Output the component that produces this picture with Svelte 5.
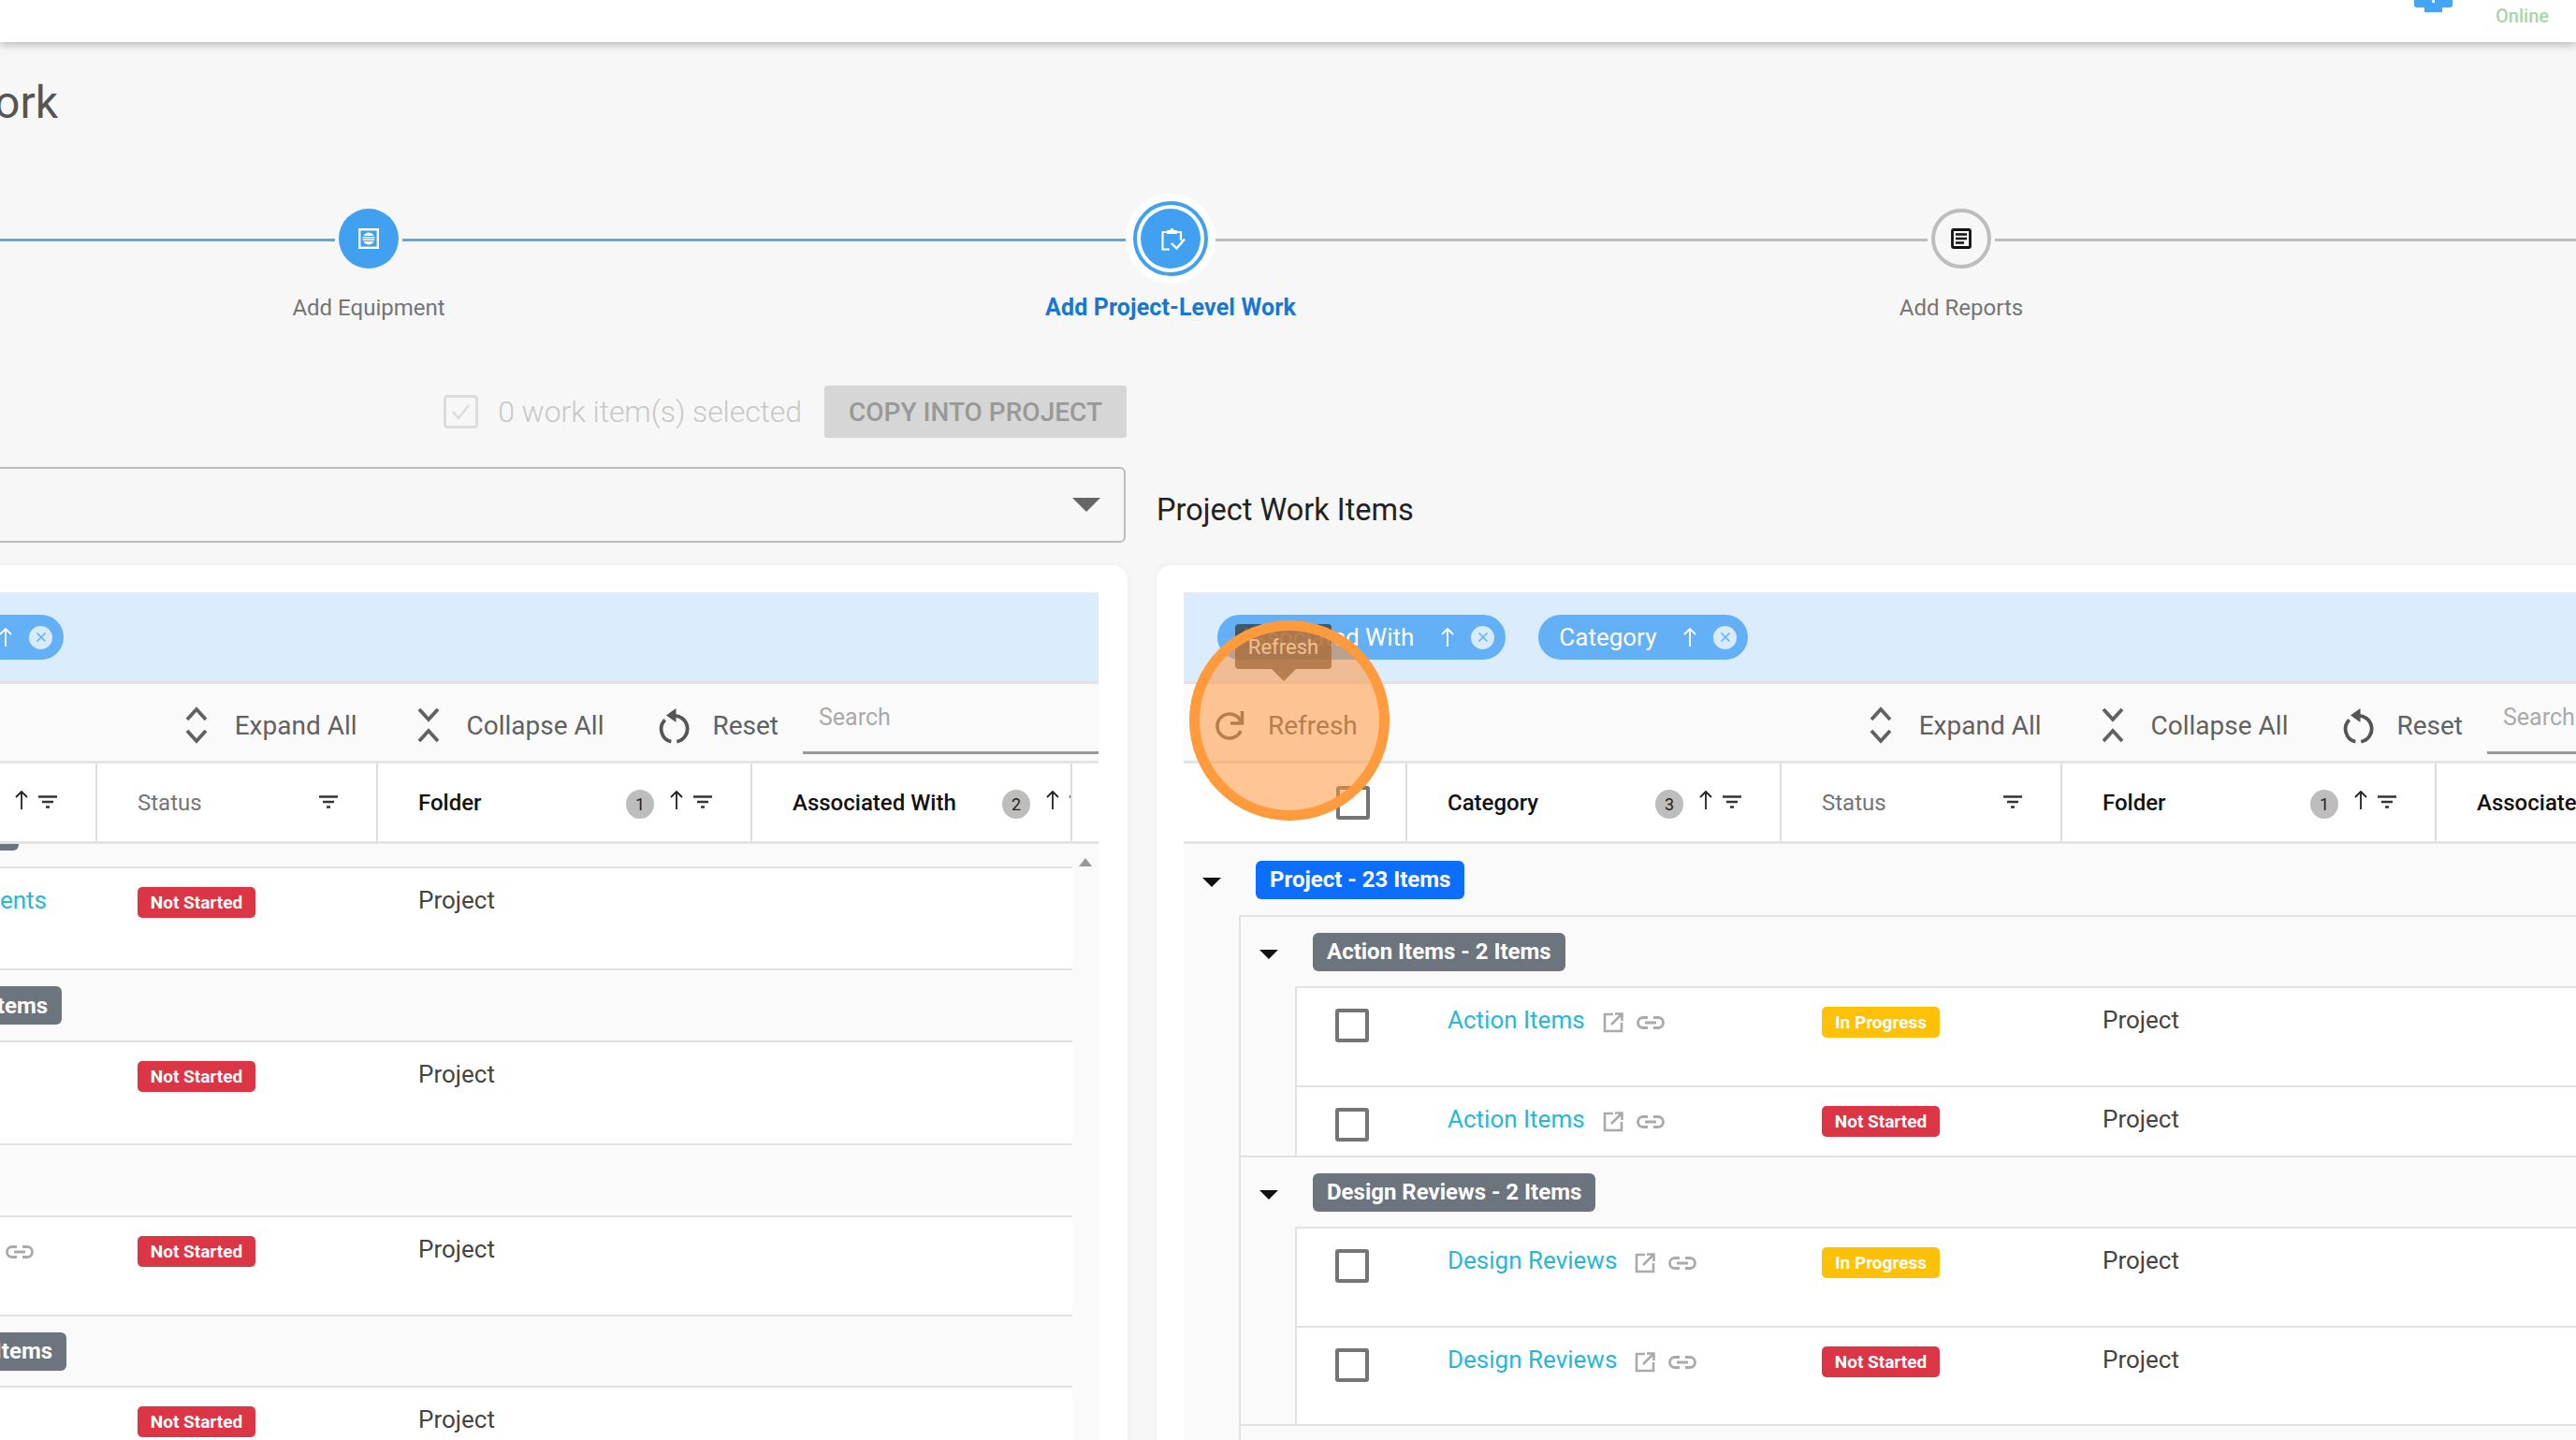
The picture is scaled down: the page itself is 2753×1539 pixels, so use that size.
<script>
  const chips = ["Associated With", "Category"];

  const leftGroups = [
    { label: "Assessments - 1 Items", chipWidth: 417, headHeight: 75, rows: [
      { name: "Site Condition Assessments", nameWidth: 303, status: "Not Started", height: 109 }
    ] },
    { label: "Closeout Items - 1 Items", chipWidth: 463, headHeight: 75, rows: [
      { name: "Closeout Checklist", nameWidth: 209, status: "Not Started", height: 110 }
    ] },
    { label: "", chipWidth: 0, headHeight: 75, rows: [
      { name: "Daily Reports", nameWidth: 204, icons: true, status: "Not Started", height: 106 }
    ] },
    { label: "Inspection Items - 1 Items", chipWidth: 468, headHeight: 74, rows: [
      { name: "Inspections", nameWidth: 209, status: "Not Started", height: 106 }
    ] }
  ];

  const rightGroups = [
    { label: "Action Items - 2 Items", headHeight: 74, rows: [
      { name: "Action Items", icons: true, status: "In Progress", height: 106 },
      { name: "Action Items", icons: true, status: "Not Started", height: 75 }
    ] },
    { label: "Design Reviews - 2 Items", headHeight: 74, rows: [
      { name: "Design Reviews", icons: true, status: "In Progress", height: 106 },
      { name: "Design Reviews", icons: true, status: "Not Started", height: 105 }
    ] },
    { label: "Drawings - 1 Items", headHeight: 74, rows: [
      { name: "Drawings", icons: true, status: "Not Started", height: 106 }
    ] }
  ];

  const panels = [
    { refresh: false, scrolled: true, groups: leftGroups },
    { refresh: true, scrolled: false, groups: rightGroups }
  ];
</script>

{#snippet sortArrow()}
  <svg class="sort-arrow" viewBox="0 0 14 20" width="14" height="20">
    <path d="M7 20V1M1 7l6-6 6 6" fill="none" stroke="#222" stroke-width="1.8" />
  </svg>
{/snippet}

{#snippet filterIcon()}
  <svg class="filter" viewBox="0 0 20 14" width="20" height="14">
    <path d="M0 1.5h20M4 7h12M8 12.5h4" fill="none" stroke="#333" stroke-width="2.6" />
  </svg>
{/snippet}

{#snippet rowIcons()}
  <svg class="ext" viewBox="0 0 22 22" width="22" height="22">
    <path d="M11 2H2v18h18v-9M9 13 20 2M13 1.5h7.500V9" fill="none" stroke="#aaa" stroke-width="2.600" />
  </svg>
  <svg class="chain" viewBox="0 0 32 14" width="32" height="14">
    <path d="M13 1.500H8a5.500 5.500 0 0 0 0 11h5M19 1.500h5a5.500 5.500 0 0 1 0 11h-5M10 7h12" fill="none" stroke="#aaa" stroke-width="2.800" />
  </svg>
{/snippet}

{#snippet headCell(title, rank, muted, wide)}
  <div class="hcell" class:clip={wide}>
    <div class="hinner" class:wide>
      <span class="htitle" class:muted>{title}</span>
      <span class="hactions">
        {#if rank}
          <span class="rank">{rank}</span>
          {@render sortArrow()}
        {/if}
        {@render filterIcon()}
      </span>
    </div>
  </div>
{/snippet}

{#snippet group(g)}
  <div class="level1">
    <div class="head" style="height: {g.headHeight}px">
      {#if g.label}
        <span class="caret"></span>
        <span class="gchip grey" style={g.chipWidth ? `width: ${g.chipWidth}px` : ""}>{g.label}</span>
      {/if}
    </div>
    <div class="rows">
      {#each g.rows as row}
        <div class="row" style="height: {row.height}px">
          <div class="cell check"><span class="box"></span></div>
          <div class="cell name">
            <span class="link" style={row.nameWidth ? `width: ${row.nameWidth}px` : ""}>{row.name}</span>
            {#if row.icons}{@render rowIcons()}{/if}
          </div>
          <div class="cell">
            <span class="badge" class:yellow={row.status === "In Progress"}>{row.status}</span>
          </div>
          <div class="cell folder">Project</div>
        </div>
      {/each}
    </div>
  </div>
{/snippet}

<div class="page">
  <header class="topbar">
    <svg class="monitor" viewBox="0 0 41 13" width="41" height="13">
      <path d="M0 0h41v5a3 3 0 0 1-3 3H30v5H11V8H3a3 3 0 0 1-3-3z" fill="#42a5f5" />
      <rect x="19" y="0" width="3" height="3" fill="#fff" />
    </svg>
    <span class="online">Online</span>
  </header>

  <div class="canvas">
    <h1>Add Project-Level Work</h1>

    <div class="stepper">
      <div class="step" style="width: 856px">
        <div class="track">
          <span class="line blue"></span>
          <span class="dot filled">
            <svg viewBox="0 0 22 22" width="22" height="22">
              <rect x="1.200" y="1.200" width="19.600" height="19.600" fill="none" stroke="#fff" stroke-width="2.400" />
              <circle cx="11" cy="11" r="6.500" fill="#fff" />
              <path d="M5 8.500h12M4.500 11h13M5 13.500h12" stroke="#42a0ee" stroke-width="1.200" />
            </svg>
          </span>
          <span class="line blue"></span>
        </div>
        <div class="label">Add Equipment</div>
      </div>
      <div class="step" style="width: 858px">
        <div class="track">
          <span class="line blue"></span>
          <span class="halo">
            <span class="ring">
              <span class="core">
                <svg class="clip-icon" viewBox="0 0 27 25" width="27" height="25">
                  <path d="M10 23.500H2.500V5H22v9" fill="none" stroke="#fff" stroke-width="2.200" />
                  <path d="M7 7V3h3.500a2 2 0 0 1 4 0H18v4z" fill="#fff" />
                  <path d="M12 17l5.500 5.500L26 12.500" fill="none" stroke="#fff" stroke-width="2.400" />
                </svg>
              </span>
            </span>
          </span>
          <span class="line grey"></span>
        </div>
        <div class="label active">Add Project-Level Work</div>
      </div>
      <div class="step" style="width: 832px">
        <div class="track">
          <span class="line grey"></span>
          <span class="dot outlined">
            <svg viewBox="0 0 22 22" width="22" height="22">
              <rect x="1.500" y="1.500" width="19" height="19" rx="1.500" fill="none" stroke="#111" stroke-width="2.800" />
              <path d="M5 6.500h12M5 11h12M5 15.500h9" stroke="#111" stroke-width="2.400" />
            </svg>
          </span>
          <span class="line grey"></span>
        </div>
        <div class="label">Add Reports</div>
      </div>
      <div class="tail"><span class="line grey"></span></div>
    </div>

    <div class="copy-row">
      <span class="copy-check">
        <svg viewBox="0 0 37 36" width="37" height="36">
          <rect x="1.500" y="1.500" width="34" height="33" rx="3" fill="none" stroke="#dcdcdc" stroke-width="3" />
          <path d="M10 18l6 7 11-14" fill="none" stroke="#dcdcdc" stroke-width="2.600" />
        </svg>
      </span>
      <span class="copy-count">0 work item(s) selected</span>
      <button class="copy-btn">COPY INTO PROJECT</button>
    </div>

    <div class="columns">
      <div class="select"><span class="select-arrow"></span></div>
      <div class="col-title">Project Work Items</div>
    </div>

    <div class="columns cards">
      {#each panels as panel}
        <section class="card">
          <div class="band">
            {#each chips as chip}
              <span class="chip">
                <span class="chip-text">{chip}</span>
                <svg viewBox="0 0 14 20" width="14" height="20">
                  <path d="M7 20V1M1 7l6-6 6 6" fill="none" stroke="#fff" stroke-width="1.800" />
                </svg>
                <span class="chip-close">
                  <svg viewBox="0 0 12 12" width="12" height="12">
                    <path d="M1.500 1.500l9 9M10.500 1.500l-9 9" stroke="#64b0f6" stroke-width="1.600" />
                  </svg>
                </span>
              </span>
            {/each}
          </div>

          <div class="toolbar">
            <div class="tool refresh">
              <svg viewBox="0 0 32 32" width="32" height="32">
                <path d="M27 12A13 13 0 1 0 27 22" fill="none" stroke="#616161" stroke-width="3.600" />
                <path d="M28.500 1v13H16" fill="none" stroke="#616161" stroke-width="3.600" />
              </svg>
              <span>Refresh</span>
            </div>
            <div class="tool-group">
              <div class="tool">
                <svg viewBox="0 0 32 40" width="32" height="40">
                  <path d="M6 14 16 3l10 11M6 26l10 11 10-11" fill="none" stroke="#616161" stroke-width="3.800" />
                </svg>
                <span>Expand All</span>
              </div>
              <div class="tool second">
                <svg viewBox="0 0 32 40" width="32" height="40">
                  <path d="M6 3l10 11L26 3M6 37l10-11 10 11" fill="none" stroke="#616161" stroke-width="3.800" />
                </svg>
                <span>Collapse All</span>
              </div>
              <div class="tool third">
                <svg viewBox="14 14 36 40" width="36" height="40">
                  <path d="M29 24.200A14 14 0 0 1 34.300 51.700M28.300 51.700A14 14 0 0 1 21.700 28.300" fill="none" stroke="#555" stroke-width="3.800" />
                  <path d="M23 23.500 33.500 16v15z" fill="#555" />
                </svg>
                <span>Reset</span>
              </div>
              <div class="search"><input type="text" placeholder="Search" /></div>
            </div>
          </div>

          <div class="thead">
            <div class="hcell first"><span class="box"></span></div>
            {@render headCell("Category", 3, false, false)}
            {@render headCell("Status", 0, true, false)}
            {@render headCell("Folder", 1, false, false)}
            {@render headCell("Associated With", 2, false, true)}
            <div class="hcell last"></div>
          </div>

          <div class="tbody">
            <div class="tscroll">
              <div class="tinner" class:scrolled={panel.scrolled}>
                {#if !panel.scrolled}
                  <div class="head top">
                    <span class="caret"></span>
                    <span class="gchip blue-chip">Project - 23 Items</span>
                  </div>
                {/if}
                {#each panel.groups as g}
                  {@render group(g)}
                {/each}
              </div>
            </div>
            <div class="scrollbar"><span class="scroll-up"></span></div>
          </div>
        </section>
      {/each}
    </div>
  </div>

  <div class="tooltip">Refresh</div>
  <div class="spotlight"></div>
</div>

<style>
  :global(body) {
    margin: 0;
    font-family: Roboto, "Liberation Sans", sans-serif;
  }

  .page {
    position: relative;
    width: 2753px;
    height: 1539px;
    overflow: hidden;
    background: #f7f7f7;
  }

  .topbar {
    position: relative;
    z-index: 2;
    height: 45px;
    background: #fff;
    box-shadow: 0 2px 10px rgba(0, 0, 0, 0.3);
    display: flex;
    justify-content: flex-end;
    align-items: flex-start;
    padding-right: 29px;
  }

  .monitor {
    margin-right: 46px;
  }

  .online {
    font-size: 20px;
    font-weight: 500;
    line-height: 24px;
    margin-top: 5px;
    color: #a5d6a7;
  }

  .canvas {
    margin-left: -564px;
    width: 3569px;
  }

  h1 {
    margin: 37px 0 0;
    width: 626px;
    height: 56px;
    font-size: 48px;
    font-weight: 400;
    line-height: 56px;
    color: #555;
    white-space: nowrap;
    display: flex;
    justify-content: flex-end;
  }

  .stepper {
    display: flex;
    margin: 69px 0 0 530px;
  }

  .step {
    display: flex;
    flex-direction: column;
    align-items: center;
    flex: none;
  }

  .track {
    display: flex;
    align-items: center;
    width: 100%;
    height: 96px;
  }

  .tail {
    display: flex;
    align-items: center;
    width: 300px;
    height: 96px;
  }

  .line {
    flex: 1;
    height: 3px;
    margin-top: 2px;
  }

  .line.blue {
    background: #5aa9e0;
  }

  .line.grey {
    background: #bdbdbd;
  }

  .dot {
    box-sizing: border-box;
    width: 64px;
    height: 64px;
    margin: 0 4px;
    border-radius: 50%;
    display: flex;
    align-items: center;
    justify-content: center;
  }

  .dot.filled {
    background: #42a0f0;
  }

  .dot.outlined {
    border: 4px solid #bdbdbd;
  }

  .halo {
    width: 96px;
    height: 96px;
    border-radius: 50%;
    background: #fff;
    display: flex;
    align-items: center;
    justify-content: center;
  }

  .ring {
    box-sizing: border-box;
    width: 80px;
    height: 80px;
    border: 4px solid #42a0f0;
    border-radius: 50%;
    padding: 4px;
  }

  .core {
    width: 100%;
    height: 100%;
    border-radius: 50%;
    background: #42a0f0;
    display: flex;
    align-items: center;
    justify-content: center;
  }

  .clip-icon {
    margin-left: 4px;
  }

  .label {
    margin-top: 11px;
    font-size: 24px;
    line-height: 30px;
    color: #757575;
    white-space: nowrap;
  }

  .label.active {
    color: #1976d2;
    font-weight: 700;
    font-size: 25px;
    letter-spacing: 0.12px;
  }

  .copy-row {
    display: flex;
    align-items: center;
    justify-content: flex-end;
    width: 1768px;
    height: 56px;
    margin-top: 68px;
  }

  .copy-check {
    display: flex;
    margin-right: 21px;
  }

  .copy-count {
    font-size: 32px;
    font-weight: 300;
    color: #c8c8c8;
    letter-spacing: -0.08px;
    margin-right: 24px;
  }

  .copy-btn {
    box-sizing: border-box;
    width: 323px;
    height: 56px;
    border: 0;
    border-radius: 3px;
    background: #d6d6d6;
    color: #999;
    font-family: inherit;
    font-size: 28px;
    font-weight: 500;
  }

  .columns {
    display: grid;
    grid-template-columns: 1769px 1769px;
    column-gap: 31px;
    margin-top: 31px;
  }

  .select {
    box-sizing: border-box;
    height: 81px;
    margin-right: 2px;
    border: 2px solid #bbb;
    border-radius: 0 6px 6px 0;
    display: flex;
    justify-content: flex-end;
    padding: 31px 25px 0 0;
  }

  .select-arrow {
    width: 0;
    height: 0;
    border-left: 15px solid transparent;
    border-right: 15px solid transparent;
    border-top: 15px solid #666;
  }

  .col-title {
    font-size: 32.5px;
    font-weight: 400;
    color: #222;
    line-height: 40px;
    padding-top: 26px;
  }

  .cards {
    margin-top: 24px;
  }

  .card {
    height: 1200px;
    padding: 29px 31px 0 29px;
    box-sizing: border-box;
    background: #fff;
    border-radius: 16px;
    box-shadow: 0 0 8px rgba(0, 0, 0, 0.05);
  }

  .band {
    box-sizing: border-box;
    height: 98px;
    background: #dbecfc;
    border-bottom: 3px solid #e2e2e2;
    display: flex;
    align-items: flex-start;
    gap: 35px;
    padding: 24px 0 0 36px;
  }

  .chip {
    box-sizing: border-box;
    height: 48px;
    border-radius: 24px;
    background: #64b0f6;
    color: #fff;
    font-size: 26px;
    padding: 0 12px 0 22px;
    display: flex;
    align-items: center;
  }

  .chip-text {
    margin-right: 29px;
  }

  .chip-close {
    width: 25px;
    height: 25px;
    margin-left: 18px;
    border-radius: 50%;
    background: #d8ebfb;
    display: flex;
    align-items: center;
    justify-content: center;
  }

  .toolbar {
    box-sizing: border-box;
    height: 85px;
    background: #fafafa;
    border-bottom: 3px solid #e4e4e4;
    display: flex;
    align-items: center;
    justify-content: space-between;
    padding: 6px 0 0 34px;
  }

  .tool-group {
    display: flex;
    align-items: center;
  }

  .tool {
    display: flex;
    align-items: center;
    gap: 25px;
    margin-right: 60px;
    font-size: 28px;
    color: #616161;
  }

  .tool.refresh {
    gap: 24px;
    margin-right: 0;
  }

  .tool.second {
    margin-right: 58px;
  }

  .tool.third {
    gap: 22px;
    margin-right: 26px;
  }

  .search {
    width: 316px;
    height: 62px;
  }

  .search input {
    box-sizing: border-box;
    width: 100%;
    height: 100%;
    border: 0;
    border-bottom: 3px solid #999;
    background: transparent;
    padding: 0 0 14px 17px;
    font-family: inherit;
    font-size: 25px;
    color: #555;
    outline: none;
  }

  .search input::placeholder {
    color: #aaa;
    opacity: 1;
  }

  .thead {
    box-sizing: border-box;
    height: 86px;
    display: grid;
    grid-template-columns: 239px 400px 300px 400px 342px 28px;
    background: #fff;
    border-bottom: 3px solid #e4e4e4;
  }

  .hcell {
    box-sizing: border-box;
    border-right: 2px solid #ddd;
    display: flex;
    min-width: 0;
  }

  .hcell.clip {
    overflow: hidden;
  }

  .hcell.first {
    align-items: center;
    padding: 0 0 0 163px;
  }

  .hcell.last {
    border-right: 0;
  }

  .hinner {
    box-sizing: border-box;
    width: 100%;
    flex: none;
    display: flex;
    align-items: center;
    justify-content: space-between;
    padding: 0 41px 0 43px;
  }

  .hinner.wide {
    width: 400px;
  }

  .htitle {
    font-size: 24px;
    font-weight: 500;
    color: #111;
    white-space: nowrap;
  }

  .htitle.muted {
    font-weight: 400;
    color: #757575;
  }

  .hactions {
    display: flex;
    align-items: center;
  }

  .rank {
    width: 30px;
    height: 31px;
    border-radius: 50%;
    background: #bdbdbd;
    color: #222;
    font-size: 18px;
    display: flex;
    align-items: center;
    justify-content: center;
    margin: 4px 17px 0 0;
  }

  .sort-arrow {
    margin: -6px 11px 0 0;
  }

  .filter {
    margin-top: -2px;
  }

  .box {
    display: block;
    box-sizing: border-box;
    width: 36px;
    height: 36px;
    border: 4px solid #757575;
    border-radius: 3px;
    background: #fff;
  }

  .tbody {
    display: grid;
    grid-template-columns: 1681px 28px;
    height: 800px;
    background: #fafafa;
  }

  .tscroll {
    overflow: hidden;
  }

  .tinner.scrolled {
    margin-top: -53px;
  }

  .scrollbar {
    display: flex;
    justify-content: center;
    padding-top: 15px;
  }

  .scroll-up {
    width: 0;
    height: 0;
    border-left: 7px solid transparent;
    border-right: 7px solid transparent;
    border-bottom: 9px solid #999;
  }

  .head {
    display: flex;
    align-items: center;
  }

  .head.top {
    height: 76px;
  }

  .caret {
    width: 0;
    height: 0;
    margin: 5px 37px 0 20px;
    border-left: 10px solid transparent;
    border-right: 10px solid transparent;
    border-top: 10px solid #111;
    flex: none;
  }

  .gchip {
    box-sizing: border-box;
    height: 41px;
    padding: 0 15px;
    border-radius: 6px;
    color: #fff;
    font-size: 24px;
    font-weight: 700;
    white-space: nowrap;
    display: flex;
    align-items: center;
    justify-content: flex-end;
    flex: none;
    overflow: hidden;
  }

  .gchip.blue-chip {
    background: #0d6efd;
  }

  .gchip.grey {
    background: #6c757d;
  }

  .level1 {
    margin-left: 59px;
    border-left: 2px solid #e2e2e2;
    border-top: 2px solid #e2e2e2;
  }

  .rows {
    margin-left: 58px;
    border-left: 2px solid #e2e2e2;
  }

  .row {
    box-sizing: border-box;
    display: grid;
    grid-template-columns: 118px 400px 300px 1fr;
    background: #fff;
    border-top: 2px solid #e2e2e2;
  }

  .cell {
    box-sizing: border-box;
    padding: 20px 0 0 43px;
    min-width: 0;
  }

  .cell.check {
    padding: 22px 0 0 41px;
  }

  .cell.name {
    display: flex;
    align-items: flex-start;
    padding-top: 19px;
    color: #29b6d6;
    font-size: 26px;
    line-height: 30px;
  }

  .link {
    flex: none;
    white-space: nowrap;
    display: flex;
    justify-content: flex-end;
  }

  .ext {
    margin: 7px 13px 0 19px;
    flex: none;
  }

  .chain {
    margin-top: 11px;
    flex: none;
  }

  .cell.folder {
    padding-top: 19px;
    font-size: 26px;
    line-height: 30px;
    color: #444;
  }

  .badge {
    display: flex;
    align-items: center;
    justify-content: center;
    width: 126px;
    height: 33px;
    border-radius: 5px;
    background: #dc3545;
    color: #fff;
    font-size: 19px;
    font-weight: 700;
  }

  .badge.yellow {
    background: #ffc107;
  }

  .tooltip {
    position: absolute;
    left: 1320px;
    top: 667px;
    width: 103px;
    height: 48px;
    border-radius: 4px;
    background: rgba(60, 60, 60, 0.78);
    color: rgba(255, 255, 255, 0.9);
    font-size: 22px;
    display: flex;
    align-items: center;
    justify-content: center;
  }

  .tooltip::after {
    content: "";
    position: absolute;
    left: 39px;
    top: 48px;
    border-left: 13px solid transparent;
    border-right: 13px solid transparent;
    border-top: 13px solid rgba(60, 60, 60, 0.78);
  }

  .spotlight {
    position: absolute;
    left: 1271px;
    top: 663px;
    width: 214px;
    height: 214px;
    box-sizing: border-box;
    border: 11px solid #ff9a3d;
    border-radius: 50%;
    background: rgba(255, 150, 60, 0.55);
  }
</style>
